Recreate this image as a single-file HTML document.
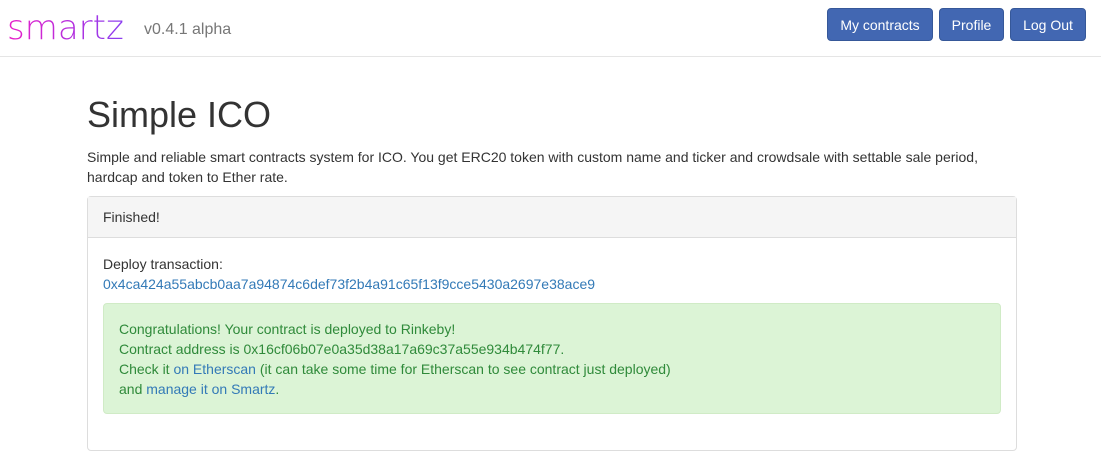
<!DOCTYPE html>
<html><head><style>
body{margin:0;width:1101px;height:474px;overflow:hidden;background:#fff;font-family:"Liberation Sans",sans-serif;font-size:14px;color:#333;line-height:20px}
.hdr{height:56px;border-bottom:1px solid #e5e5e5;position:relative}
.logo{position:absolute;left:7px;top:6px;font-size:34px;font-family:"DejaVu Sans",sans-serif;font-weight:200;background:linear-gradient(90deg,#e91ec8,#8a3ef0);-webkit-background-clip:text;color:transparent;line-height:44px}
.ver{position:absolute;left:144px;top:20px;font-size:16px;color:#777}
.btn{position:absolute;top:8px;height:33px;background:#4267b2;border:1px solid #365899;border-radius:4px;color:#fff;font-size:14px;line-height:33px;text-align:center;box-sizing:border-box}
h1{position:absolute;left:87px;top:95px;margin:0;font-size:36px;font-weight:400;line-height:40px}
.desc{position:absolute;left:87px;top:147px;width:930px}
.panel{position:absolute;left:87px;top:196px;width:928px;height:253px;border:1px solid #ddd;border-radius:4px}
.ph{height:40px;background:#f5f5f5;border-bottom:1px solid #ddd;padding:0 15px;line-height:40px}
a{color:#337ab7;text-decoration:none}
.alert{position:absolute;left:15px;top:106px;width:898px;height:111px;background:#dcf4d6;border:1px solid #d0ebc6;border-radius:4px;color:#2f8a3a;box-sizing:border-box;padding:15px}
</style></head><body>
<div class="hdr">
<div class="logo">smartz</div>
<div class="ver">v0.4.1 alpha</div>
<div class="btn" style="left:827px;width:106px">My contracts</div>
<div class="btn" style="left:939px;width:65px">Profile</div>
<div class="btn" style="left:1010px;width:76px">Log Out</div>
</div>
<h1>Simple ICO</h1>
<div class="desc">Simple and reliable smart contracts system for ICO. You get ERC20 token with custom name and ticker and crowdsale with settable sale period, hardcap and token to Ether rate.</div>
<div class="panel">
<div class="ph">Finished!</div>
<div style="position:absolute;left:15px;top:57px">Deploy transaction:<br><a>0x4ca424a55abcb0aa7a94874c6def73f2b4a91c65f13f9cce5430a2697e38ace9</a></div>
<div class="alert">Congratulations! Your contract is deployed to Rinkeby!<br>Contract address is 0x16cf06b07e0a35d38a17a69c37a55e934b474f77.<br>Check it <a>on Etherscan</a> (it can take some time for Etherscan to see contract just deployed)<br>and <a>manage it on Smartz</a>.</div>
</div>
</body></html>
